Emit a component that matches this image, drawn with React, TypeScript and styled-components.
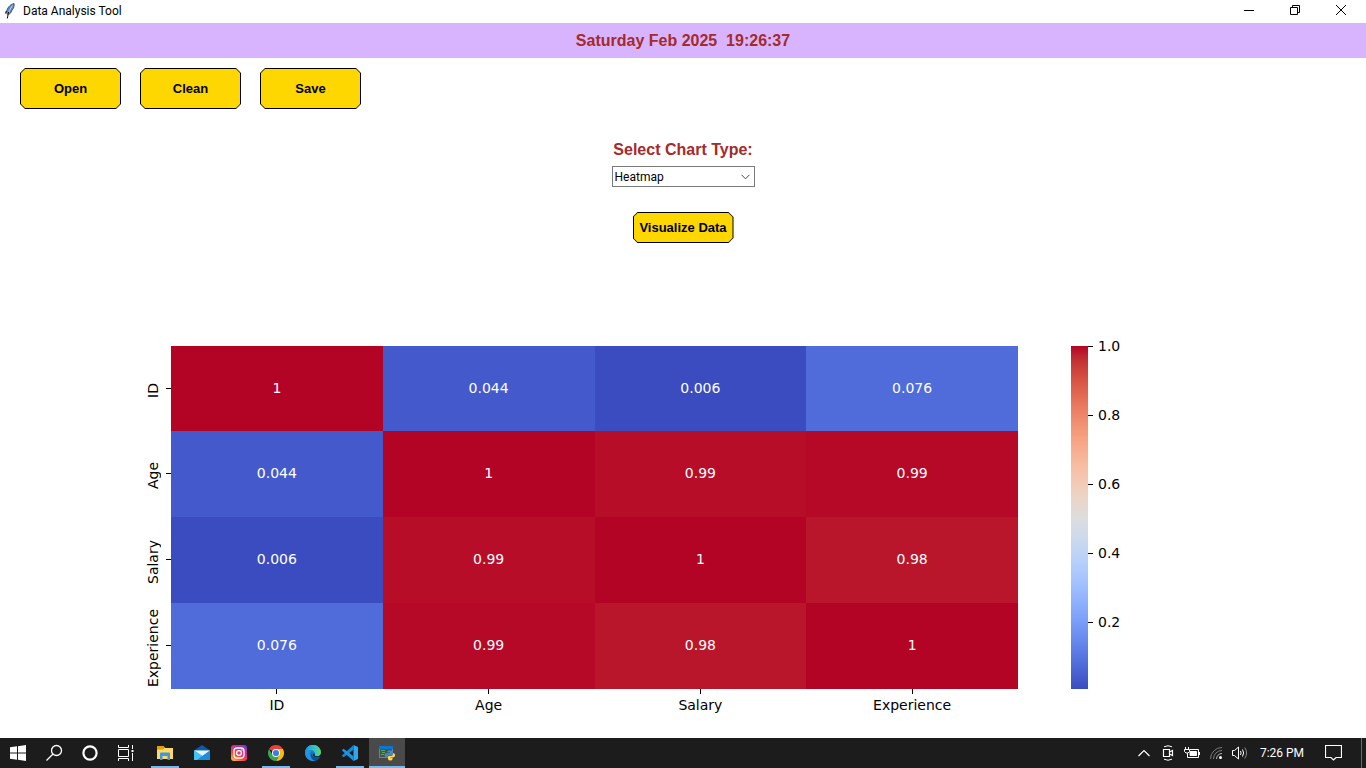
import React from "react";
import styled, { createGlobalStyle } from "styled-components";

const UI_FONT = 'Roboto, "Open Sans", sans-serif';
const LABEL_FONT = '"Liberation Sans", Arial, sans-serif';
const PLOT_FONT = '"DejaVu Sans", sans-serif';

const GlobalStyle = createGlobalStyle`
  *, *::before, *::after { box-sizing: border-box; }
  body { margin: 0; background: #ffffff; color: #000000; font-family: ${UI_FONT}; }
  button { border: 0; padding: 0; margin: 0; background: none; color: inherit; font: inherit; }
`;

const Desktop = styled.div`
  min-height: 100vh;
  display: flex;
  flex-direction: column;
`;

const TitleBar = styled.header`
  display: flex;
  height: 23px;
  padding: 0 2px 0 5px;
  & > svg { margin-top: 3px; }
`;

const WindowTitle = styled.h1`
  flex: 1;
  margin: 0 0 0 7px;
  font: 400 12px/23px ${UI_FONT};
`;

const WindowButton = styled.button`
  display: grid;
  place-items: center;
  width: 46px;
  height: 20px;
`;

const ClockBand = styled.div`
  height: 35px;
  background: #d8b4ff;
  color: #a52a2a;
  font: 700 16px/35px ${LABEL_FONT};
  text-align: center;
  white-space: pre;
`;

const Content = styled.main`
  flex: 1;
  display: flex;
  flex-direction: column;
`;

const Toolbar = styled.div`
  display: flex;
  gap: 19px;
  padding: 10px 20px;
`;

const chamfer = (n: number) =>
  `polygon(${n}px 0, calc(100% - ${n}px) 0, 100% ${n}px, 100% calc(100% - ${n}px), calc(100% - ${n}px) 100%, ${n}px 100%, 0 calc(100% - ${n}px), 0 ${n}px)`;

const GoldButton = styled.button<{ $compact?: boolean }>`
  display: grid;
  width: 101px;
  height: ${(p) => (p.$compact ? 31 : 41)}px;
  padding: 1px;
  background: #000000;
  clip-path: ${chamfer(5)};
`;

const GoldFace = styled.span`
  display: grid;
  place-items: center;
  background: #ffd700;
  clip-path: ${chamfer(4)};
  color: #000000;
  font: 700 13px/16px ${LABEL_FONT};
  white-space: nowrap;
`;

const ChartForm = styled.form`
  display: flex;
  flex-direction: column;
  align-items: center;
  padding-top: 21px;
`;

const ChartLabel = styled.label`
  color: #a52a2a;
  font: 700 16px/20px ${LABEL_FONT};
  margin-bottom: 6px;
`;

const SelectBox = styled.div`
  display: grid;
  width: 143px;
  height: 21px;
  margin-bottom: 25px;
  & > * { grid-area: 1 / 1; }
  & > svg { place-self: center end; margin-right: 5px; pointer-events: none; }
`;

const ChartSelect = styled.select`
  appearance: none;
  width: 100%;
  border: 1px solid #7a7a7a;
  border-radius: 0;
  padding: 0 20px 0 2px;
  background: #ffffff;
  color: #000000;
  font: 400 12px/18px ${UI_FONT};
`;

const Figure = styled.figure`
  display: grid;
  grid-template-columns: 142fr 876fr 53fr 17px 278fr;
  align-items: start;
  margin: 94px 0 0;
`;

const Heatmap = styled.table`
  grid-column: 2;
  width: 100%;
  margin-top: 9px;
  table-layout: fixed;
  border-collapse: collapse;
  font: 400 14px/18px ${PLOT_FONT};
  th, td { padding: 0; font-weight: 400; text-align: center; }
`;

const HeaderCol = styled.col`
  width: 29px;
`;

const HeatCell = styled.td<{ $fill: string }>`
  height: 86px;
  background: ${(p) => p.$fill};
  color: #ffffff;
  tr > && { padding-bottom: 2px; }
  tr:first-child > & { height: 85px; }
`;

const RowLabel = styled.div`
  display: flex;
  align-items: center;
  justify-content: space-between;
  padding-left: 2px;
  &::after { content: ""; width: 5px; height: 1px; background: #000000; }
`;

const Vertical = styled.span`
  writing-mode: vertical-rl;
  transform: rotate(180deg);
  padding-bottom: 4px;
`;

const ColLabel = styled.div`
  display: flex;
  flex-direction: column;
  align-items: center;
  gap: 2px;
  &::before { content: ""; width: 1px; height: 5px; background: #000000; }
`;

const ColorBar = styled.div`
  grid-column: 4;
  height: 343px;
  margin-top: 9px;
`;

const Scale = styled.ol`
  grid-column: 5;
  margin: 0;
  padding: 0;
  list-style: none;
  font: 400 14px/18px ${PLOT_FONT};
`;

const ScaleMark = styled.li`
  display: flex;
  align-items: center;
  gap: 5px;
  height: 18px;
  margin-bottom: 51px;
  &:last-child { margin-bottom: 0; }
  &::before { content: ""; width: 5px; height: 1px; background: #000000; }
`;

const Taskbar = styled.footer`
  display: flex;
  height: 30px;
  background: #1c1c1c;
  color: #ffffff;
`;

const SystemButton = styled.button`
  display: grid;
  place-items: center;
  width: 36px;
`;

const Apps = styled.nav`
  display: flex;
  gap: 1px;
  padding-left: 3px;
  flex: 1;
`;

const AppButton = styled.button<{ $open?: boolean; $active?: boolean }>`
  display: grid;
  place-items: center;
  width: 36px;
  background: ${(p) =>
    p.$active
      ? "linear-gradient(#76b9ed, #76b9ed) bottom / 36px 2px no-repeat, #4a4a4a"
      : p.$open
        ? "linear-gradient(#76b9ed, #76b9ed) bottom / 28px 2px no-repeat"
        : "none"};
`;

const Tray = styled.div`
  display: flex;
  align-items: stretch;
  padding-right: 4px;
`;

const TrayButton = styled.button<{ $wide?: boolean }>`
  display: grid;
  place-items: center;
  width: ${(p) => (p.$wide ? 56 : 24)}px;
`;

const Clock = styled.time`
  width: 53px;
  padding-left: 7px;
  font: 400 12px/30px ${UI_FONT};
  text-align: center;
  white-space: nowrap;
`;

const DesktopEdge = styled.button`
  width: 1px;
  background: #6a6a6a;
`;

const names = ["ID", "Age", "Salary", "Experience"];

const matrix = [
  [["1", "#b40426"], ["0.044", "#445acc"], ["0.006", "#3b4cc0"], ["0.076", "#506bda"]],
  [["0.044", "#445acc"], ["1", "#b40426"], ["0.99", "#b70d28"], ["0.99", "#b50927"]],
  [["0.006", "#3b4cc0"], ["0.99", "#b70d28"], ["1", "#b40426"], ["0.98", "#ba162b"]],
  [["0.076", "#506bda"], ["0.99", "#b50927"], ["0.98", "#ba162b"], ["1", "#b40426"]],
];

// Cool-to-warm colour map, lowest value first, evenly spaced.
const coolwarm = [
  "59,76,192", "68,90,204", "77,104,215", "87,117,225", "98,130,234", "108,142,241",
  "119,154,247", "130,165,251", "141,176,254", "152,185,255", "163,194,255",
  "174,201,253", "184,208,249", "194,213,244", "204,217,238", "213,219,230",
  "221,221,221", "229,216,209", "236,211,197", "241,204,185", "245,196,173",
  "247,187,160", "247,177,148", "247,166,135", "244,154,123", "241,141,111",
  "236,127,99", "229,112,88", "222,96,77", "213,80,66", "203,62,56", "192,40,47",
  "180,4,38",
];

const MapBar = styled(ColorBar)`
  background: linear-gradient(to top, ${coolwarm.map((c) => `rgb(${c})`).join(", ")});
`;

const Feather = () => (
  <svg width="11" height="16" viewBox="0 0 11 16" aria-hidden="true">
    <path d="M9 .5C5 1.500 1.800 5 1.500 9.500L2.500 12C5.500 11 6.500 9 7 7L8.500 5C9.300 3 9.300 1.500 9 .5Z" fill="#5688c5" stroke="#33414f" strokeWidth=".8" />
    <path d="M7.500 2.500C5 6 3.500 9 2.800 12.500" stroke="#c4def5" strokeWidth="1" fill="none" />
    <path d="M3.600 9L2.300 15.500M1.200 8L.6 10.500" stroke="#111" strokeWidth="1" fill="none" />
  </svg>
);

const WindowsLogo = () => (
  <svg width="16" height="16" viewBox="0 0 16 16" fill="#fff" aria-hidden="true">
    <path d="M0 2.300L7 1.300V7.500H0ZM8 1.150L16 0V7.500H8ZM0 8.500H7V14.700L0 13.700ZM8 8.500H16V16L8 14.850Z" />
  </svg>
);

const SearchIcon = () => (
  <svg width="18" height="18" viewBox="0 0 18 18" fill="none" stroke="#fff" strokeWidth="1.300" aria-hidden="true">
    <circle cx="11.500" cy="6.500" r="5" />
    <path d="M8 10L1.500 16.500" />
  </svg>
);

const CortanaIcon = () => (
  <svg width="18" height="18" viewBox="0 0 18 18" aria-hidden="true">
    <circle cx="9" cy="9" r="6.600" fill="none" stroke="#fff" strokeWidth="2.200" />
  </svg>
);

const TaskViewIcon = () => (
  <svg width="16" height="16" viewBox="0 0 16 16" fill="none" stroke="#fff" strokeWidth="1" aria-hidden="true">
    <path d="M.5 0V2.500H10.500V0M.5 16V13.500H10.500V16M.5 4.500H10.500V11.500H.5ZM14.500 0V16" />
    <path d="M13 4.500H16V7.500H13Z" fill="#fff" stroke="#1c1c1c" />
  </svg>
);

const FolderIcon = () => (
  <svg width="16" height="16" viewBox="0 0 16 16" aria-hidden="true">
    <path d="M0 1H6.500L8.500 3H16V14H0Z" fill="#e3a008" />
    <path d="M7.500 3H16V14H0V4.500H6Z" fill="#ffd866" />
    <path d="M3 8.500Q3 7.500 4 7.500H12Q13 7.500 13 8.500V15H10.500V11H5.500V15H3Z" fill="#3f97e0" />
  </svg>
);

const MailIcon = () => (
  <svg width="16" height="16" viewBox="0 0 16 16" aria-hidden="true">
    <path d="M0 5.500L8 0L16 5.500V8H0Z" fill="#0f5aa8" />
    <path d="M0 5.500H16V15H0Z" fill="#27a3e8" />
    <path d="M0 5.500H16L8.500 11Z" fill="#e9f3fb" />
    <path d="M0 5.500L8.500 11L3 15H0Z" fill="#42c3f6" />
    <path d="M16 5.500V15H3L8.500 11Z" fill="#1b8fdd" />
  </svg>
);

const InstagramIcon = () => (
  <svg width="16" height="16" viewBox="0 0 16 16" aria-hidden="true">
    <defs>
      <linearGradient id="insta" x1="0.100" y1="1" x2="0.800" y2="0">
        <stop offset="0" stopColor="#ffc23d" />
        <stop offset=".35" stopColor="#f9483a" />
        <stop offset=".65" stopColor="#d62e87" />
        <stop offset="1" stopColor="#7a3bd0" />
      </linearGradient>
    </defs>
    <rect width="16" height="16" rx="3" fill="url(#insta)" />
    <rect x="3" y="3" width="10" height="10" rx="3" fill="none" stroke="#fff" strokeWidth="1.300" />
    <circle cx="8" cy="8" r="2.400" fill="none" stroke="#fff" strokeWidth="1.300" />
    <circle cx="11" cy="5" r=".7" fill="#fff" />
  </svg>
);

const ChromeIcon = () => (
  <svg width="16" height="16" viewBox="0 0 16 16" aria-hidden="true">
    <path d="M8 8L1.070 4A8 8 0 0 1 14.930 4H8Z" fill="#ea4335" />
    <path d="M14.930 4A8 8 0 0 1 8 16L11.460 10L8 4Z" fill="#fbbc05" />
    <path d="M8 16A8 8 0 0 1 1.070 4L4.540 10L8 12L11.460 10Z" fill="#34a853" />
    <circle cx="8" cy="8" r="4" fill="#fff" />
    <circle cx="8" cy="8" r="3.100" fill="#3b7ded" />
  </svg>
);

const EdgeIcon = () => (
  <svg width="16" height="16" viewBox="0 0 16 16" aria-hidden="true">
    <defs>
      <linearGradient id="edgeTop" x1="0" y1=".5" x2="1" y2=".5">
        <stop offset="0" stopColor="#2391dd" />
        <stop offset=".6" stopColor="#31c5c9" />
        <stop offset="1" stopColor="#67d45a" />
      </linearGradient>
    </defs>
    <circle cx="8" cy="8" r="8" fill="#167acb" />
    <path d="M0 8A8 8 0 0 1 16 7.500C16 10 14 11.500 11.500 11.300C9.500 11.200 9.200 10.500 9.800 9.600C10.400 8 9.500 5.500 6.500 5.200C3.500 5 1 6.500 0 8Z" fill="url(#edgeTop)" />
    <path d="M6.500 6C3.500 7.500 4.500 13.500 10 15.700C5 16.800 0 13 0 8C1.500 6 4 5.200 6.500 6Z" fill="#2293df" />
    <path d="M7.300 8C6.500 11 9.500 13.600 15 12.200C13.500 14.500 11.500 15.500 10 15.700C5.500 14.200 4.800 10 7.300 8Z" fill="#0d4f93" />
    <path d="M9.800 9.600C9.200 10.500 9.500 11.200 11.500 11.300C14 11.500 15.500 10.500 16 8.500V11C14 13 9 12.500 8 10.200C7.800 8.500 9 7.500 9.800 9.600Z" fill="#1c1c1c" />
  </svg>
);

const CodeIcon = () => (
  <svg width="16" height="16" viewBox="0 0 16 16" aria-hidden="true">
    <path d="M11.500 0L16 2V14L11.500 16Z" fill="#2fa8f0" />
    <path d="M11.500 0V4.800L1.600 12.300L0 11V10.400Z" fill="#1687d4" />
    <path d="M11.500 16V11.200L1.600 3.700L0 5V5.600Z" fill="#1c95e2" />
  </svg>
);

const PythonAppIcon = () => (
  <svg width="16" height="16" viewBox="0 0 16 16" aria-hidden="true">
    <rect x=".5" y="1.500" width="13" height="11" fill="#4a5053" stroke="#7a7f82" />
    <rect x="0" y="1" width="14" height="3" fill="#0878d4" />
    <path d="M2 5.500H6M3 7.500H6M2 9.500H5" stroke="#4fae55" strokeWidth="1" />
    <path d="M10 5.500H12.500Q14 5.500 14 7V9Q14 10 13 10H10Q8.500 10 8.500 12H7Q5.500 12 5.500 10Q5.500 8.300 7 8.300H11V7.500H8.500V6.500Q8.500 5.500 10 5.500Z" fill="#4b8bc4" />
    <path d="M14 8.300H14.800Q16 8.300 16 10.300Q16 12.300 14.500 12.300H11.500V13H13.500V14Q13.500 15.500 11.500 15.500Q9 15.500 9 14V12Q9 10.800 10.300 10.800H12.800Q14 10.800 14 9.500Z" fill="#ffd94f" />
  </svg>
);

const ChevronUp = () => (
  <svg width="12" height="8" viewBox="0 0 12 8" fill="none" stroke="#fff" strokeWidth="1.200" aria-hidden="true">
    <path d="M.5 7L6 1.500L11.500 7" />
  </svg>
);

const MeetIcon = () => (
  <svg width="12" height="16" viewBox="0 0 12 16" fill="none" stroke="#fff" aria-hidden="true">
    <path d="M1.500 4.500H7.500V11.500H1.500ZM7.500 7L10.500 5.500V10.500L7.500 9" strokeWidth="1.200" />
    <path d="M2 1.800Q6 -.3 10 1.800M2 14.200Q6 16.300 10 14.200" />
  </svg>
);

const BatteryIcon = () => (
  <svg width="16" height="12" viewBox="0 0 16 12" fill="none" stroke="#fff" aria-hidden="true">
    <path d="M6 2.500H14.500V10.500H3.500V6M15.500 5V8" />
    <path d="M6 4.500H12.500V8.500H6Z" fill="#fff" />
    <path d="M1.500 0V2.500M4.500 0V2.500M.5 2.500H5.500V4.500L4 6H2L.5 4.500Z" />
  </svg>
);

const WifiIcon = () => (
  <svg width="12" height="12" viewBox="0 0 12 12" fill="none" aria-hidden="true">
    <path d="M.5 12A11.500 11.500 0 0 1 12 .5M3.500 12A8.500 8.500 0 0 1 12 3.500" stroke="#7d7d7d" />
    <path d="M6.500 12A5.500 5.500 0 0 1 12 6.500" stroke="#b4b4b4" />
    <circle cx="10.500" cy="10.500" r="1.500" fill="#fff" />
  </svg>
);

const SpeakerIcon = () => (
  <svg width="16" height="14" viewBox="0 0 16 14" fill="none" stroke="#fff" aria-hidden="true">
    <path d="M.5 4.500H2.500L6.500 1V13L2.500 9.500H.5Z" />
    <path d="M8.500 5Q9.700 7 8.500 9M10.500 3.500Q12.700 7 10.500 10.500" />
    <path d="M12.700 1.500Q16.500 7 12.700 12.500" stroke="#8a8a8a" />
  </svg>
);

const NoteIcon = () => (
  <svg width="17" height="16" viewBox="0 0 17 16" fill="none" stroke="#fff" aria-hidden="true">
    <path d="M.5 .5H16.500V12.500H11L8.500 15L6 12.500H.5Z" strokeWidth="1.200" />
  </svg>
);

const systemItems = [
  ["Start", WindowsLogo],
  ["Search", SearchIcon],
  ["Cortana", CortanaIcon],
  ["Task View", TaskViewIcon],
] as const;

const apps = [
  { name: "File Explorer", Icon: FolderIcon, open: true },
  { name: "Mail", Icon: MailIcon },
  { name: "Instagram", Icon: InstagramIcon },
  { name: "Google Chrome", Icon: ChromeIcon, open: true },
  { name: "Microsoft Edge", Icon: EdgeIcon },
  { name: "Visual Studio Code", Icon: CodeIcon, open: true },
  { name: "Python", Icon: PythonAppIcon, active: true },
];

const trayItems = [
  ["Show hidden icons", ChevronUp],
  ["Meet Now", MeetIcon],
  ["Battery", BatteryIcon],
  ["Network", WifiIcon],
  ["Volume", SpeakerIcon],
] as const;

export default function App() {
  return (
    <Desktop>
      <GlobalStyle />
      <TitleBar>
        <Feather />
        <WindowTitle>Data Analysis Tool</WindowTitle>
        <WindowButton aria-label="Minimize">
          <svg width="10" height="10" viewBox="0 0 10 10" stroke="#000"><path d="M0 5.500H10" /></svg>
        </WindowButton>
        <WindowButton aria-label="Restore">
          <svg width="10" height="10" viewBox="0 0 10 10" fill="none" stroke="#000">
            <path d="M.5 2.500H7.500V9.500H.5ZM2.500 2.500V.5H9.500V7.500H7.500" />
          </svg>
        </WindowButton>
        <WindowButton aria-label="Close">
          <svg width="10" height="10" viewBox="0 0 10 10" stroke="#000"><path d="M0 0L10 10M10 0L0 10" /></svg>
        </WindowButton>
      </TitleBar>
      <ClockBand>{"Saturday Feb 2025  19:26:37"}</ClockBand>
      <Content>
        <Toolbar>
          {["Open", "Clean", "Save"].map((t) => (
            <GoldButton key={t}><GoldFace>{t}</GoldFace></GoldButton>
          ))}
        </Toolbar>
        <ChartForm onSubmit={(e) => e.preventDefault()}>
          <ChartLabel htmlFor="chart-type">Select Chart Type:</ChartLabel>
          <SelectBox>
            <ChartSelect id="chart-type" defaultValue="Heatmap">
              <option>Heatmap</option>
            </ChartSelect>
            <svg width="9" height="6" viewBox="0 0 9 6" fill="none" stroke="#444"><path d="M.5 .8L4.500 4.800L8.500 .8" /></svg>
          </SelectBox>
          <GoldButton $compact><GoldFace>Visualize Data</GoldFace></GoldButton>
        </ChartForm>
        <Figure>
          <Heatmap>
            <colgroup>
              <HeaderCol />
              {names.map((n) => <col key={n} />)}
            </colgroup>
            <tbody>
              {matrix.map((row, r) => (
                <tr key={names[r]}>
                  <th scope="row"><RowLabel><Vertical>{names[r]}</Vertical></RowLabel></th>
                  {row.map(([value, fill], c) => (
                    <HeatCell key={names[c]} $fill={fill}>{value}</HeatCell>
                  ))}
                </tr>
              ))}
            </tbody>
            <tfoot>
              <tr>
                <td />
                {names.map((n) => <th key={n} scope="col"><ColLabel>{n}</ColLabel></th>)}
              </tr>
            </tfoot>
          </Heatmap>
          <MapBar />
          <Scale>
            {["1.0", "0.8", "0.6", "0.4", "0.2"].map((v) => <ScaleMark key={v}>{v}</ScaleMark>)}
          </Scale>
        </Figure>
      </Content>
      <Taskbar>
        {systemItems.map(([name, Icon]) => (
          <SystemButton key={name} aria-label={name}><Icon /></SystemButton>
        ))}
        <Apps>
          {apps.map(({ name, Icon, open, active }) => (
            <AppButton key={name} aria-label={name} $open={open} $active={active}><Icon /></AppButton>
          ))}
        </Apps>
        <Tray>
          {trayItems.map(([name, Icon]) => (
            <TrayButton key={name} aria-label={name}><Icon /></TrayButton>
          ))}
          <Clock>7:26 PM</Clock>
          <TrayButton $wide aria-label="Notifications"><NoteIcon /></TrayButton>
          <DesktopEdge aria-label="Show desktop" />
        </Tray>
      </Taskbar>
    </Desktop>
  );
}
